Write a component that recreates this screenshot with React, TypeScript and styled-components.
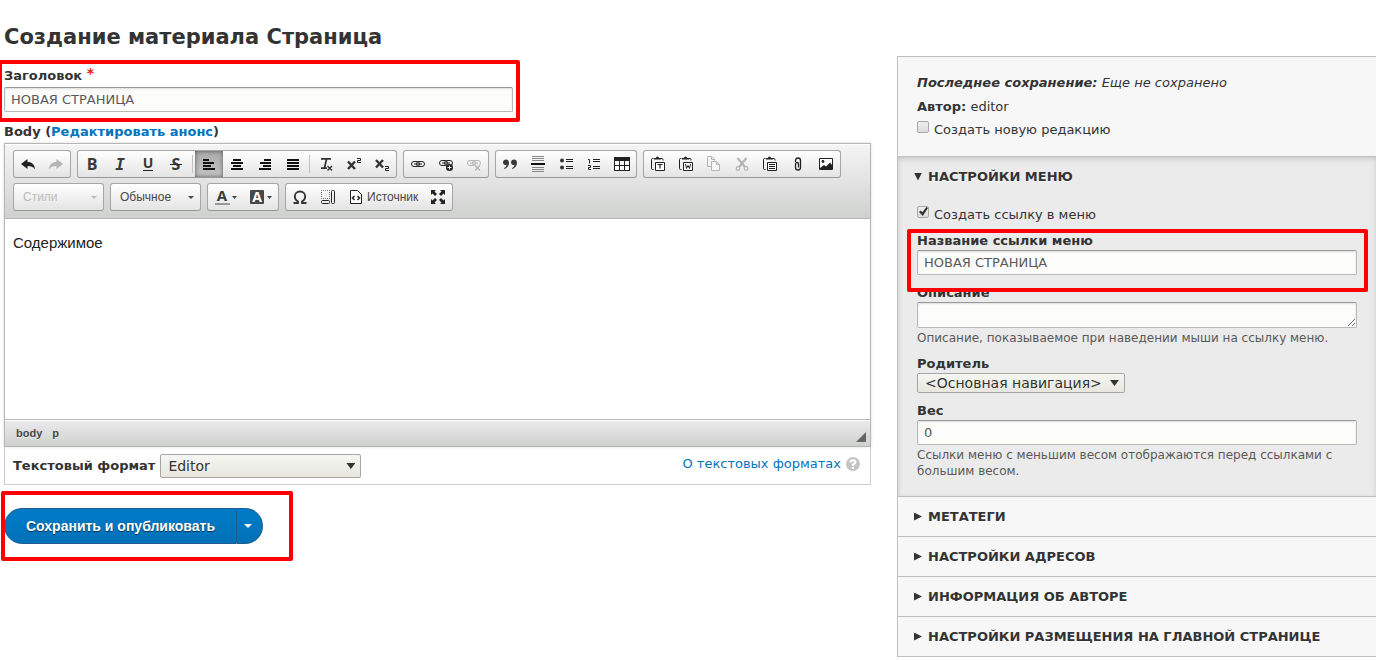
import React from 'react';
import styled, { createGlobalStyle } from 'styled-components';

const dejavu = '"DejaVu Sans", sans-serif';
const liberation = '"Liberation Sans", sans-serif';

const GlobalStyle = createGlobalStyle`
  * { box-sizing: border-box; }
  body {
    margin: 0;
    background: #fff;
    color: #333;
    font: 13px/20px ${dejavu};
  }
`;

const Page = styled.form`
  display: grid;
  grid-template-columns: minmax(0, 1fr) 479px;
  column-gap: 26px;
  padding: 0 0 2px 4px;
  align-items: start;
  margin: 0;
`;

const Main = styled.main`
  padding-top: 21px;
`;

const Title = styled.h1`
  margin: 0 0 13px;
  font-size: 21px;
  line-height: 32px;
`;

const Label = styled.label`
  display: block;
  font-weight: bold;
`;

const MenuLabel = styled(Label)`
  padding-top: 2px;
  line-height: 18px;
`;

const Required = styled.span`
  color: #e62020;
  font-size: 14px;
  line-height: 12px;
  vertical-align: 2px;
`;

const Link = styled.a`
  color: #0074bd;
  text-decoration: none;
`;

const Field = styled.div`
  position: relative;
  margin-bottom: 7px;
`;

const CheckField = styled.div`
  margin-bottom: 5px;
`;

const TitleField = styled(Field)`
  display: grid;
  row-gap: 1px;
  max-width: 509px;
  margin-bottom: 10px;
`;

const Highlight = styled.div<{ $inset: string }>`
  position: absolute;
  z-index: 1;
  inset: ${(p) => p.$inset};
  border: 4px solid #fe0000;
  border-radius: 2px;
  pointer-events: none;
`;

const TextInput = styled.input`
  display: block;
  width: 100%;
  height: 25px;
  padding: 0 6px;
  border: 1px solid #b8b8b8;
  border-top-color: #999;
  border-radius: 2px;
  background: #fcfcfa;
  box-shadow: inset 0 1px 2px rgba(0, 0, 0, 0.125);
  color: #595959;
  font: 13px ${dejavu};
`;

const TextArea = styled.textarea`
  display: block;
  width: 100%;
  height: 26px;
  padding: 3px 6px;
  border: 1px solid #b8b8b8;
  border-top-color: #999;
  border-radius: 2px;
  background: #fcfcfa;
  box-shadow: inset 0 1px 2px rgba(0, 0, 0, 0.125);
  font: 13px ${dejavu};
  resize: vertical;
`;

const SelectBox = styled.span<{ $width: number; $height: number }>`
  position: relative;
  display: block;
  width: ${(p) => p.$width}px;
  height: ${(p) => p.$height}px;

  &::after {
    content: '';
    position: absolute;
    right: 6px;
    top: calc(50% - 3px);
    width: 9px;
    height: 6px;
    background: #333;
    clip-path: polygon(0 0, 100% 0, 50% 100%);
    pointer-events: none;
  }

  select {
    appearance: none;
    display: block;
    width: 100%;
    height: 100%;
    padding: 0 18px 0 7px;
    border: 1px solid #a6a6a6;
    border-radius: 2px;
    background: linear-gradient(#f6f6f3, #e7e7df);
    color: #333;
    font: 14px ${dejavu};
  }
`;

/* Editor */

const Editor = styled.section`
  margin-top: 1px;
  border: 1px solid #b6b6b6;
  box-shadow: 0 0 3px rgba(0, 0, 0, 0.15);
  font-family: ${liberation};
`;

const Toolbar = styled.div`
  display: flex;
  flex-direction: column;
  gap: 5px;
  padding: 6px 8px 7px;
  border-bottom: 1px solid #b6b6b6;
  background: linear-gradient(#f5f5f5, #cfd1cf);
  box-shadow: inset 0 1px 0 #fff;
`;

const ToolRow = styled.div`
  display: flex;
  flex-wrap: wrap;
  gap: 5px 6px;
`;

const ToolGroup = styled.div`
  display: flex;
  height: 28px;
  border: 1px solid #a6a6a6;
  border-bottom-color: #979797;
  border-radius: 3px;
  background: linear-gradient(#fff, #e4e4e4);
`;

const ToolButton = styled.button<{ $active?: boolean; $labelled?: boolean }>`
  display: flex;
  align-items: center;
  gap: ${(p) => (p.$labelled ? 3 : 2)}px;
  height: 26px;
  padding: 0 6px;
  border: 0;
  background: ${(p) => (p.$active ? 'linear-gradient(#aaa, #c4c4c4)' : 'none')};
  box-shadow: ${(p) => (p.$active ? 'inset 0 0 4px rgba(0, 0, 0, 0.55)' : 'none')};
  color: #474747;
  font: 12px ${liberation};

  svg { display: block; flex: none; overflow: visible; }
`;

const Separator = styled.i`
  width: 1px;
  height: 18px;
  margin: 4px 2px 0;
  background: #c0c0c0;
`;

const Combo = styled.span<{ $muted?: boolean }>`
  position: relative;
  width: 91px;
  height: 28px;

  &::after {
    content: '';
    position: absolute;
    right: 7px;
    top: 13px;
    width: 6px;
    height: 3px;
    background: ${(p) => (p.$muted ? '#bbb' : '#474747')};
    clip-path: polygon(0 0, 100% 0, 50% 100%);
    pointer-events: none;
  }

  select {
    appearance: none;
    width: 100%;
    height: 100%;
    padding: 0 18px 0 9px;
    border: 1px solid #a6a6a6;
    border-bottom-color: #979797;
    border-radius: 3px;
    background: linear-gradient(#fff, #e4e4e4);
    color: ${(p) => (p.$muted ? '#bbb' : '#474747')};
    opacity: 1;
    font: 12px ${liberation};
  }
`;

const EditArea = styled.div`
  min-height: 200px;
  padding: 14px 8px;
  background: #fff;
  color: #222;
  font-size: 15px;
  line-height: 20px;
  outline: none;

  p { margin: 0; }
`;

const PathBar = styled.div`
  display: flex;
  justify-content: space-between;
  height: 27px;
  padding: 0 4px 0 7px;
  border-top: 1px solid #b6b6b6;
  background: linear-gradient(#ebebeb, #cfd1cf);
  box-shadow: inset 0 1px 0 #fff;
`;

const PathItem = styled.a`
  display: inline-block;
  padding: 0 6px 0 4px;
  color: #474747;
  font-size: 11px;
  font-weight: bold;
  line-height: 27px;
  text-decoration: none;
  text-shadow: 0 1px 0 rgba(255, 255, 255, 0.5);
`;

const ResizeGrip = styled.span`
  align-self: flex-end;
  width: 10px;
  height: 10px;
  margin-bottom: 4px;
  background: #666;
  clip-path: polygon(100% 0, 100% 100%, 0 100%);
`;

const FormatBar = styled.div`
  display: flex;
  align-items: center;
  gap: 5px;
  padding: 7px 10px 6px 8px;
  border: 1px solid #ccc;
  border-top: 0;
`;

const FormatLink = styled(Link)`
  display: flex;
  align-items: center;
  gap: 5px;
  height: 24px;
  margin-left: auto;
  padding-bottom: 4px;
`;

const Actions = styled.div`
  position: relative;
  display: inline-flex;
  height: 36px;
  margin-top: 23px;
`;

const PrimaryButton = styled.button<{ $side: 'left' | 'right' }>`
  display: flex;
  align-items: center;
  justify-content: center;
  padding: ${(p) => (p.$side === 'left' ? '0 21px' : '0 10px 0 7px')};
  border: 1px solid #1e5c90;
  border-left-width: ${(p) => (p.$side === 'left' ? 1 : 0)}px;
  border-radius: ${(p) => (p.$side === 'left' ? '18px 0 0 18px' : '0 18px 18px 0')};
  background: linear-gradient(#007bc6, #0071b8);
  color: #fff;
  font: bold 14px ${liberation};
  text-shadow: 0 1px 1px rgba(0, 0, 0, 0.6);
`;

/* Sidebar */

const Sidebar = styled.aside`
  margin-top: 56px;
  border: 1px solid #bfbfbf;
  border-width: 1px 0 0 1px;
  background: #f7f7f7;
`;

const Meta = styled.div`
  padding: 14px 19px 16px;
  border-bottom: 1px solid #bfbfbf;
`;

const MetaLine = styled.p<{ $italic?: boolean }>`
  margin: 0;
  line-height: 24px;
  font-style: ${(p) => (p.$italic ? 'italic' : 'normal')};
`;

const CheckLabel = styled.label`
  display: flex;
  gap: 5px;
  padding-top: 1px;
`;

const CheckBox = styled.input`
  appearance: none;
  position: relative;
  width: 12px;
  height: 12px;
  margin: 1px 0 0;
  border: 1px solid #a8a8a8;
  border-radius: 2px;
  background: linear-gradient(#eee, #dcdcdc);

  &:checked::after {
    content: '';
    position: absolute;
    inset: 0 0 1px 1px;
    background: #333;
    clip-path: polygon(0 55%, 18% 38%, 38% 58%, 82% 0, 100% 12%, 42% 100%);
  }
`;

const Panel = styled.details`
  border-bottom: 1px solid #bfbfbf;

  &[open] {
    background: #ebebeb;
    box-shadow: inset 0 2px 5px rgba(0, 0, 0, 0.15);
  }
`;

const Summary = styled.summary`
  display: flex;
  align-items: center;
  gap: 6px;
  height: 39px;
  padding: 0 16px;
  font-weight: bold;
  text-transform: uppercase;
  text-shadow: 0 1px 0 #fff;
  list-style: none;

  &::before {
    content: '';
    width: 8px;
    height: 8px;
    background: #333;
    clip-path: polygon(0 0, 100% 50%, 0 100%);
  }

  details[open] > &::before {
    clip-path: polygon(0 0, 100% 0, 50% 100%);
  }
`;

const PanelBody = styled.div`
  padding: 8px 19px 10px;
`;

const Help = styled.p`
  margin: 2px 0 0;
  color: #595959;
  font-size: 12px;
  line-height: 16px;
`;

/* Toolbar icons, all on a 16px grid */

type IconProps = { children: React.ReactNode; muted?: boolean };

const Icon = ({ children, muted }: IconProps) => (
  <svg width="16" height="16" viewBox="0 0 16 16" fill="none" stroke="none" color={muted ? '#b4b4b4' : '#222'} aria-hidden="true">
    {children}
  </svg>
);

type GlyphProps = { x?: number; y?: number; size?: number; family?: string; italic?: boolean; fill?: string; children: string };

const Glyph = ({ x = 8, y = 14, size = 16, family = 'Open Sans', italic, fill = '#3a3a3a', children }: GlyphProps) => (
  <text x={x} y={y} fontSize={size} fontFamily={family} fontWeight="bold" fontStyle={italic ? 'italic' : 'normal'} fill={fill} textAnchor="middle">
    {children}
  </text>
);

const Bars = ({ rows }: { rows: [number, number][] }) => (
  <g fill="#111" shapeRendering="crispEdges">
    {rows.map(([x, w], i) => (
      <rect key={i} x={x} y={3 + i * 3} width={w} height="2" />
    ))}
  </g>
);

const UndoPath = () => (
  <path fill="currentColor" d="M1 8 7.500 3v3c4.500 0 7.300 2.500 7.500 7.500-1.700-2.700-4-3.500-7.500-3.500v3z" />
);

const Chain = ({ y = 5.5 }: { y?: number }) => (
  <g stroke="currentColor">
    <rect x="1.500" y={y} width="8" height="5" rx="2.500" />
    <rect x="6.500" y={y} width="8" height="5" rx="2.500" />
    <path d={`M4 ${y + 2.5}h8`} />
  </g>
);

const Clipboard = ({ children }: { children: React.ReactNode }) => (
  <>
    <path stroke="currentColor" d="M3.500 2.500h-1q-1 0-1 1v9q0 1 1 1h1M11 2.500h1q1 0 1 1v1" />
    <path fill="currentColor" d="M4 3.500V2h2q0-1.500 1.500-1.500T9 2h2v1.500z" />
    <path fill="#fff" stroke="currentColor" d="M5.500 6.500h9v8h-9z" />
    {children}
  </>
);

const Arrow = () => (
  <svg width="5" height="3" viewBox="0 0 5 3" aria-hidden="true">
    <path d="M0 0h5L2.500 3z" fill="#474747" />
  </svg>
);

type Tool = { name: string; icon: React.ReactNode; muted?: boolean; active?: boolean };

const history: Tool[] = [
  { name: 'Отменить', icon: <UndoPath /> },
  { name: 'Повторить', muted: true, icon: <g transform="matrix(-1 0 0 1 16 0)"><UndoPath /></g> },
];

const styles: Tool[] = [
  { name: 'Полужирный', icon: <Glyph>B</Glyph> },
  { name: 'Курсив', icon: <Glyph family="DejaVu Sans Mono" italic>I</Glyph> },
  { name: 'Подчеркнутый', icon: <><Glyph y={12} size={14}>U</Glyph><path d="M3 14.500h10" stroke="#222" /></> },
  { name: 'Зачеркнутый', icon: <><Glyph>S</Glyph><path d="M2 8.500h12" stroke="#222" /></> },
];

const alignment: Tool[] = [
  { name: 'По левому краю', active: true, icon: <Bars rows={[[2, 6], [2, 11], [2, 8], [2, 12]]} /> },
  { name: 'По центру', icon: <Bars rows={[[4, 8], [2, 12], [4, 8], [2, 12]]} /> },
  { name: 'По правому краю', icon: <Bars rows={[[7, 7], [3, 11], [6, 8], [2, 12]]} /> },
  { name: 'По ширине', icon: <Bars rows={[[2, 12], [2, 12], [2, 12], [2, 12]]} /> },
];

const scripts: Tool[] = [
  { name: 'Убрать форматирование', icon: <><path d="M3 2.800h10M8.500 3 6.500 12M3 12.200h6" stroke="#333" strokeWidth="1.700" /><path d="m9.500 10 4.500 4.500m0-4.500-4.500 4.500" stroke="#333" strokeWidth="1.400" /></> },
  { name: 'Надстрочный индекс', icon: <><path d="m2 5.500 7 7.500m0-7.500L2 13" stroke="#333" strokeWidth="2.400" /><path d="M11 2.500h3.500v2h-3v2H15" stroke="#222" /></> },
  { name: 'Подстрочный индекс', icon: <><path d="m2 4 7 7.500M9 4l-7 7.500" stroke="#333" strokeWidth="2.400" /><path d="M11 10.500h3.500v2h-3v2H15" stroke="#222" /></> },
];

const links: Tool[] = [
  { name: 'Ссылка', icon: <Chain /> },
  { name: 'Изменить ссылку', icon: <><Chain y={4.5} /><circle cx="11.500" cy="11.500" r="3.500" fill="#222" /><path d="M11.500 9.500v4m-2-2h4" stroke="#fff" /></> },
  { name: 'Убрать ссылку', muted: true, icon: <><Chain y={4.5} /><path d="m9 9.500 5 5m0-5-5 5" stroke="#f4f4f4" strokeWidth="3" /><path d="m9 9.500 5 5m0-5-5 5" stroke="#b4b4b4" strokeWidth="1.500" /></> },
];

const blocks: Tool[] = [
  { name: 'Цитата', icon: <path fill="#3a3a3a" d="M4 3.500c2 0 3 1.300 3 3.200C7 9.500 5.300 12 2.500 13l-.500-.800C3.500 11.400 4.300 10.500 4.500 9 2.500 9.300 1 8 1 6.400 1 4.700 2.300 3.500 4 3.500zm8 0c2 0 3 1.300 3 3.200 0 2.800-1.700 5.300-4.500 6.300l-.500-.800c1.500-.800 2.300-1.700 2.500-3.200C10.500 9.300 9 8 9 6.400 9 4.700 10.300 3.500 12 3.500z" /> },
  { name: 'Горизонтальная линия', icon: <><path d="M2 .500h12M2 2.500h12M2 4.500h12M2 11.500h12M2 13.500h12M2 15.500h12" stroke="#888" /><path d="M1 8h14" stroke="#111" strokeWidth="2" /></> },
  { name: 'Маркированный список', icon: <><circle cx="4" cy="4.500" r="2" fill="#333" /><circle cx="4" cy="11.500" r="2" fill="#333" /><path d="M8 3.500h7M8 5.500h7M8 10.500h7M8 12.500h7" stroke="#222" /></> },
  { name: 'Нумерованный список', icon: <><path d="M2 3.500h1.500v4M2 9.500h2.500v2h-2v2H5" stroke="#222" /><path d="M7 3.500h7M7 5.500h7M7 10.500h7M7 12.500h7" stroke="#222" /></> },
  { name: 'Таблица', icon: <><path fill="#222" d="M0 1h16v14H0z" /><path fill="#fff" d="M1 5h4v4H1zm5 0h4v4H6zm5 0h4v4h-4zM1 10h4v4H1zm5 0h4v4H6zm5 0h4v4h-4z" /></> },
];

const inserts: Tool[] = [
  { name: 'Вставить только текст', icon: <Clipboard><path d="M7.500 8.500h5M10 8.500v4" stroke="#222" strokeWidth="1.200" /></Clipboard> },
  { name: 'Вставить из Word', icon: <Clipboard><path d="m7.500 8 1 4.500L10 9.500l1.500 3 1-4.500" stroke="#222" /></Clipboard> },
  { name: 'Копировать', muted: true, icon: <><path d="M5.500 10.500h-4v-10h4.500l2.500 2.500v1.500M5.500.500v3h3" stroke="currentColor" /><path d="M5.500 5.500h5l3 3v6h-8zM10.500 5.500v3h3" fill="#fafafa" stroke="currentColor" /></> },
  { name: 'Вырезать', muted: true, icon: <><path d="M3.500 2 11 11M12.500 2 5 11" stroke="currentColor" strokeWidth="2.200" /><circle cx="4" cy="12.500" r="1.800" stroke="currentColor" strokeWidth="1.200" /><circle cx="12" cy="12.500" r="1.800" stroke="currentColor" strokeWidth="1.200" /></> },
  { name: 'Вставить', icon: <Clipboard><path d="M7 8.500h6M7 10.500h6M7 12.500h6" stroke="#222" /></Clipboard> },
  { name: 'Файл', icon: <path d="M5.500 6V4.500q0-2.500 2.500-2.500t2.500 2.500v7q0 2.500-2.500 2.500T5.500 11.500V8.500Q5.500 6.500 7 6.500T8.500 8v3.500" stroke="#222" strokeWidth="1.300" /> },
  { name: 'Изображение', icon: <><path fill="#fff" stroke="#222" d="M1.500 2.500h13v11h-13z" /><circle cx="5" cy="5.500" r="1.400" fill="#222" /><path fill="#222" d="m2 12 4-3 2 1.500 4-4 2.500 3V13H2z" /></> },
];

const Tools = ({ items }: { items: Tool[] }) => (
  <>
    {items.map((t) => (
      <ToolButton key={t.name} type="button" aria-label={t.name} $active={t.active}>
        <Icon muted={t.muted}>{t.icon}</Icon>
      </ToolButton>
    ))}
  </>
);

const EditorToolbar = () => (
  <Toolbar>
    <ToolRow>
      <ToolGroup><Tools items={history} /></ToolGroup>
      <ToolGroup>
        <Tools items={styles} />
        <Separator />
        <Tools items={alignment} />
        <Separator />
        <Tools items={scripts} />
      </ToolGroup>
      <ToolGroup><Tools items={links} /></ToolGroup>
      <ToolGroup><Tools items={blocks} /></ToolGroup>
      <ToolGroup><Tools items={inserts} /></ToolGroup>
    </ToolRow>
    <ToolRow>
      <Combo $muted>
        <select aria-label="Стили" disabled><option>Стили</option></select>
      </Combo>
      <Combo>
        <select aria-label="Форматирование"><option>Обычное</option></select>
      </Combo>
      <ToolGroup>
        <ToolButton type="button" aria-label="Цвет текста">
          <Icon><Glyph y={12} size={15}>A</Glyph><path fill="#999" d="M1 14h15v2H1z" /></Icon>
          <Arrow />
        </ToolButton>
        <ToolButton type="button" aria-label="Цвет фона">
          <Icon><rect x="1" y="1" width="14" height="14" rx="1" fill="#474747" /><Glyph y={13} size={14} fill="#fff">A</Glyph></Icon>
          <Arrow />
        </ToolButton>
      </ToolGroup>
      <ToolGroup>
        <ToolButton type="button" aria-label="Специальный символ">
          <Icon>
            <path d="M1.500 14h4.500v-1.500C3.800 11.300 2.800 9.600 2.800 7.500 2.800 4.500 5 2.500 8 2.500s5.200 2 5.200 5c0 2.100-1 3.800-3.200 5V14h4.500" stroke="#333" strokeWidth="1.800" />
          </Icon>
        </ToolButton>
        <ToolButton type="button" aria-label="Отображать блоки">
          <Icon>
            <path d="M1 1.500h9M1 9.500h9M1.500 1v9M9.500 1v9" stroke="#777" strokeDasharray="1 1" shapeRendering="crispEdges" />
            <rect x="11.500" y="1.500" width="3" height="13" rx="1" stroke="#222" />
            <rect x="1.500" y="11.500" width="8" height="3" rx="1" stroke="#222" />
          </Icon>
        </ToolButton>
        <ToolButton type="button" $labelled>
          <Icon>
            <path d="M2.500 1.500h7l4 4v9h-11z" stroke="#222" fill="#fff" />
            <path d="M6.500 7 4.500 9l2 2M9.500 7l2 2-2 2" stroke="#222" strokeWidth="1.500" />
          </Icon>
          Источник
        </ToolButton>
        <ToolButton type="button" aria-label="Развернуть">
          <Icon>
            <path fill="#222" d="M1 1h5L4.500 2.500 7 5 5 7 2.500 4.500 1 6zM15 1h-5l1.500 1.500L9 5l2 2 2.500-2.500L15 6zM1 15h5l-1.500-1.500L7 11 5 9l-2.500 2.500L1 10zM15 15h-5l1.500-1.500L9 11l2-2 2.500 2.500L15 10z" />
          </Icon>
        </ToolButton>
      </ToolGroup>
    </ToolRow>
  </Toolbar>
);

const closedPanels = ['Метатеги', 'Настройки адресов', 'Информация об авторе', 'Настройки размещения на главной странице'];

export default function App() {
  return (
    <>
      <GlobalStyle />
      <Page onSubmit={(e: React.FormEvent) => e.preventDefault()}>
        <Main>
          <Title>Создание материала Страница</Title>
          <TitleField>
            <Label htmlFor="title">Заголовок <Required>*</Required></Label>
            <TextInput id="title" defaultValue="НОВАЯ СТРАНИЦА" />
            <Highlight $inset="-6px -7px -10px -6px" />
          </TitleField>
          <Label as="div" id="body-label">Body (<Link href="#summary">Редактировать анонс</Link>)</Label>
          <Editor>
            <EditorToolbar />
            <EditArea contentEditable suppressContentEditableWarning role="textbox" aria-labelledby="body-label">
              <p>Содержимое</p>
            </EditArea>
            <PathBar>
              <span>
                <PathItem href="#body">body</PathItem>
                <PathItem href="#p">p</PathItem>
              </span>
              <ResizeGrip />
            </PathBar>
          </Editor>
          <FormatBar>
            <Label htmlFor="format">Текстовый формат</Label>
            <SelectBox $width={201} $height={24}>
              <select id="format"><option>Editor</option></select>
            </SelectBox>
            <FormatLink href="#formats">
              О текстовых форматах
              <svg width="14" height="14" viewBox="0 0 14 14" aria-hidden="true">
                <circle cx="7" cy="7" r="7" fill="#c4c4c4" />
                <path d="M4.500 5.500Q4.500 3.300 7 3.300t2.500 2Q9.500 6.500 7 7.500V9" fill="none" stroke="#fff" strokeWidth="2" />
                <path d="M6 10h2v2H6z" fill="#fff" />
              </svg>
            </FormatLink>
          </FormatBar>
          <Actions>
            <PrimaryButton type="submit" $side="left">Сохранить и опубликовать</PrimaryButton>
            <PrimaryButton type="button" $side="right" aria-label="Другие действия">
              <svg width="8" height="4" viewBox="0 0 8 4" aria-hidden="true"><path d="M0 0h8L4 4z" fill="#fff" /></svg>
            </PrimaryButton>
            <Highlight $inset="-17px -30px -17px -3px" />
          </Actions>
        </Main>

        <Sidebar>
          <Meta>
            <MetaLine $italic><b>Последнее сохранение:</b> Еще не сохранено</MetaLine>
            <MetaLine><b>Автор:</b> editor</MetaLine>
            <CheckLabel><CheckBox type="checkbox" />Создать новую редакцию</CheckLabel>
          </Meta>
          <Panel open>
            <Summary>Настройки меню</Summary>
            <PanelBody>
              <CheckField>
                <CheckLabel><CheckBox type="checkbox" defaultChecked />Создать ссылку в меню</CheckLabel>
              </CheckField>
              <Field>
                <MenuLabel htmlFor="menu-title">Название ссылки меню</MenuLabel>
                <TextInput id="menu-title" defaultValue="НОВАЯ СТРАНИЦА" />
                <Highlight $inset="-1px -11px -17px -10px" />
              </Field>
              <Field>
                <MenuLabel htmlFor="menu-description">Описание</MenuLabel>
                <TextArea id="menu-description" />
                <Help>Описание, показываемое при наведении мыши на ссылку меню.</Help>
              </Field>
              <Field>
                <MenuLabel htmlFor="menu-parent">Родитель</MenuLabel>
                <SelectBox $width={208} $height={20}>
                  <select id="menu-parent"><option>&lt;Основная навигация&gt;</option></select>
                </SelectBox>
              </Field>
              <Field>
                <MenuLabel htmlFor="menu-weight">Вес</MenuLabel>
                <TextInput id="menu-weight" defaultValue="0" />
                <Help>Ссылки меню с меньшим весом отображаются перед ссылками с большим весом.</Help>
              </Field>
            </PanelBody>
          </Panel>
          {closedPanels.map((name) => (
            <Panel key={name}><Summary>{name}</Summary></Panel>
          ))}
        </Sidebar>
      </Page>
    </>
  );
}
